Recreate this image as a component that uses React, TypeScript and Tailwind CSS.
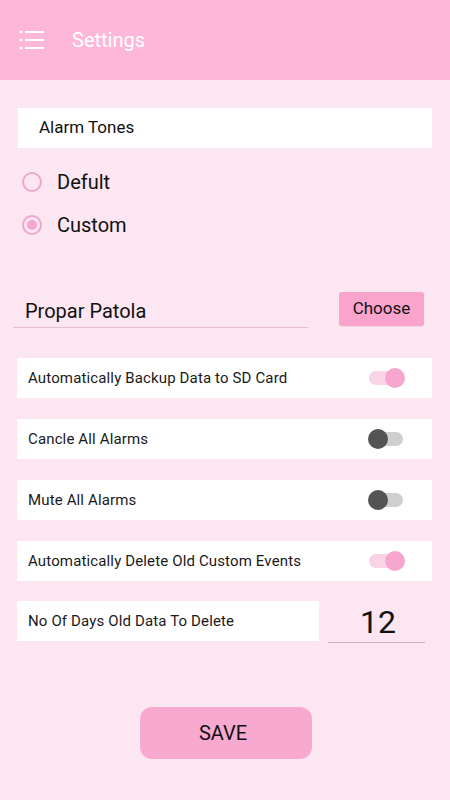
import React from "react";

function Toggle({ on }: { on: boolean }) {
  return (
    <div className="relative w-[34px] h-[14px] mr-[29px]">
      <div className={`absolute inset-0 rounded-full ${on ? "bg-[#f8d4e6]" : "bg-[#cfcfcf]"}`} />
      <div
        className={`absolute top-[-3px] w-[20px] h-[20px] rounded-full ${on ? "right-[-2px] bg-[#f7a6cf]" : "left-[-1px] bg-[#545454]"}`}
      />
    </div>
  );
}

function Row({ label, on }: { label: string; on: boolean }) {
  return (
    <div className="flex items-center justify-between bg-white h-[40px] ml-[17px] mr-[18px] pl-[11px]">
      <span className="text-[15px] tracking-[0.14px] text-[#1a1a1a]">{label}</span>
      <Toggle on={on} />
    </div>
  );
}

export default function App() {
  return (
    <div className="w-[450px] h-[800px] bg-[#fbe6f1] flex flex-col" style={{ fontFamily: "Roboto, 'Noto Sans', sans-serif" }}>
      <div className="h-[80px] bg-[#ffb7d9] flex items-center shrink-0">
        <svg width="26" height="22" viewBox="0 0 26 22" className="ml-[19px]">
          <circle cx="2" cy="3" r="1.5" fill="white" />
          <circle cx="2" cy="11" r="1.5" fill="white" />
          <circle cx="2" cy="19" r="1.5" fill="white" />
          <rect x="6" y="2" width="19" height="2" fill="white" />
          <rect x="6" y="10" width="19" height="2" fill="white" />
          <rect x="6" y="18" width="19" height="2" fill="white" />
        </svg>
        <span className="ml-[27px] text-white text-[20px]">Settings</span>
      </div>

      <div className="mt-[28px] mx-[18px] h-[40px] bg-white flex items-center pl-[21px]">
        <span className="text-[17px] text-[#111]">Alarm Tones</span>
      </div>

      <div className="flex items-center mt-[22px] ml-[22px] h-[24px]">
        <div className="w-[20px] h-[20px] rounded-full border-2 border-[#f2a6cc]" />
        <span className="ml-[15px] text-[20px] text-[#111]">Defult</span>
      </div>
      <div className="flex items-center mt-[19px] ml-[22px] h-[24px]">
        <div className="w-[20px] h-[20px] rounded-full border-2 border-[#f2a6cc] flex items-center justify-center">
          <div className="w-[10px] h-[10px] rounded-full bg-[#f7a6cf]" />
        </div>
        <span className="ml-[15px] text-[20px] text-[#111]">Custom</span>
      </div>

      <div className="flex items-start mt-[55px] h-[35px]">
        <div className="ml-[13px] w-[295px] h-[36px] border-b border-[#e7bfd4] flex items-end pb-[1px] pl-[12px]">
          <span className="text-[20px] text-[#111]">Propar Patola</span>
        </div>
        <div className="ml-[31px] w-[85px] h-[34px] bg-[#f9a3cd] rounded-[3px] flex items-center justify-center shadow-[0_1px_1px_rgba(0,0,0,0.06)]">
          <span className="text-[17px] text-[#111]">Choose</span>
        </div>
      </div>

      <div className="mt-[31px] flex flex-col gap-[21px]">
        <Row label="Automatically Backup Data to SD Card" on={true} />
        <Row label="Cancle All Alarms" on={false} />
        <Row label="Mute All Alarms" on={false} />
        <Row label="Automatically Delete Old Custom Events" on={true} />
      </div>

      <div className="flex items-start mt-[20px]">
        <div className="ml-[17px] w-[302px] h-[40px] bg-white flex items-center pl-[11px]">
          <span className="text-[15px] tracking-[0.14px] text-[#1a1a1a]">No Of Days Old Data To Delete</span>
        </div>
        <div className="ml-[9px] w-[97px] h-[42px] border-b border-[#c9b3bf] flex items-center justify-center">
          <span className="text-[32px] text-[#111] leading-none pl-[3px]">12</span>
        </div>
      </div>

      <div className="flex justify-center mt-[64px]">
        <div className="w-[172px] h-[52px] bg-[#f7a9d0] rounded-[12px] ml-[2px] flex items-center justify-center pr-[6px]">
          <span className="text-[20px] text-[#111]">SAVE</span>
        </div>
      </div>
    </div>
  );
}
